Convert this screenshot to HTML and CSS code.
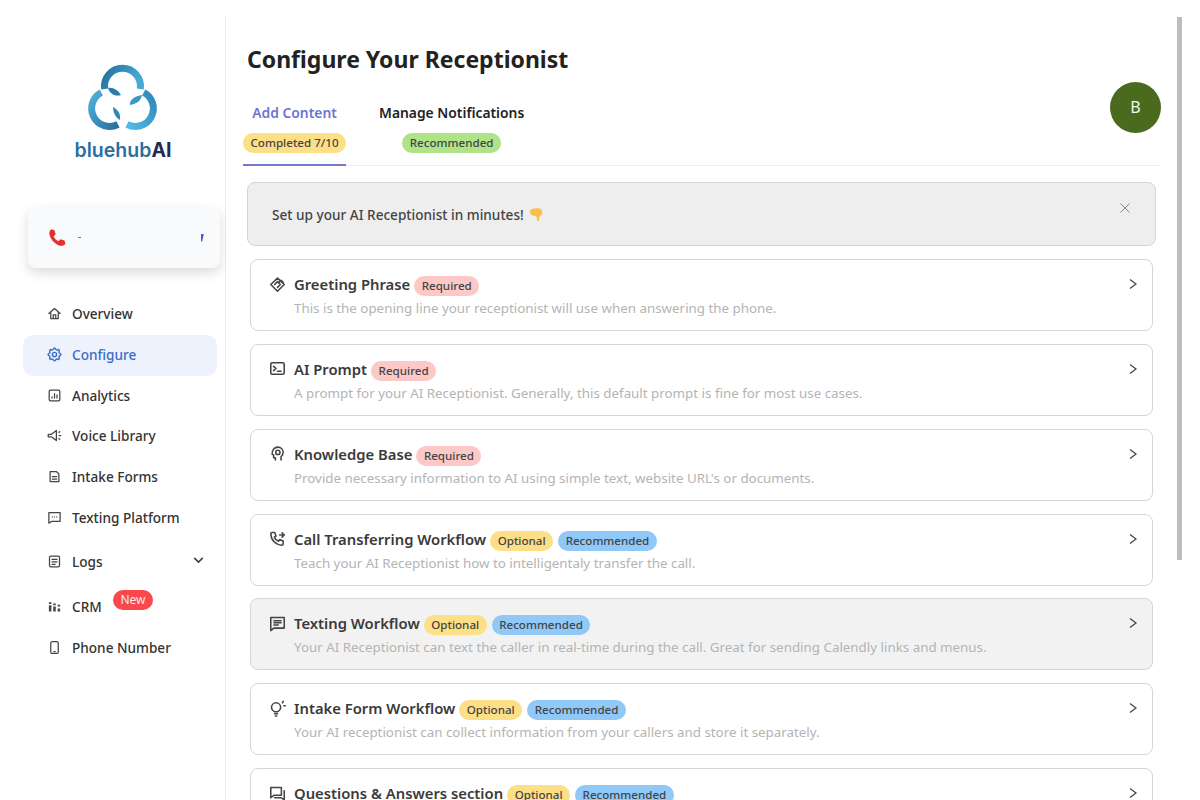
FILE: index.html
```html
<!DOCTYPE html>
<html lang="en">
<head>
  <meta charset="UTF-8">
  <title>Configure Your Receptionist</title>
  <link rel="stylesheet" href="styles.css">
</head>
<body>
  <div class="app">
    <aside class="sidebar">
      <div class="brand">
        <svg class="logo" viewBox="0 0 80 72" width="80" height="72">
          <defs>
            <linearGradient id="arcTop" x1="0" y1="0" x2="1" y2="0.3">
              <stop offset="0" stop-color="#24719f"/>
              <stop offset="1" stop-color="#45a9d6"/>
            </linearGradient>
            <linearGradient id="arcLeft" x1="0" y1="0" x2="1" y2="1">
              <stop offset="0" stop-color="#4fb2dd"/>
              <stop offset="1" stop-color="#2a6f9f"/>
            </linearGradient>
            <linearGradient id="arcRight" x1="1" y1="0" x2="0" y2="1">
              <stop offset="0" stop-color="#2f86b6"/>
              <stop offset="1" stop-color="#55bbe6"/>
            </linearGradient>
          </defs>
          <path d="M21.700 27A18 18 0 1 1 57.300 27" fill="none" stroke="url(#arcTop)" stroke-width="7"/>
          <path d="M18.300 30.500A18 18 0 1 0 35 62.400" fill="none" stroke="url(#arcLeft)" stroke-width="7"/>
          <path d="M60.700 30.500A18 18 0 1 1 44 62.400" fill="none" stroke="url(#arcRight)" stroke-width="7"/>
          <path d="M25 26C30 25 35 28 38 33C32 35 27 32 25 26Z" fill="#2a7dab"/>
          <path d="M47 43C46 38 52 34 59 33C58 39 53 42 47 43Z" fill="#3b98c6"/>
          <path d="M30 45C34 47 38 51 37 58C33 56 30 51 30 45Z" fill="#3286b6"/>
        </svg>
        <div class="wordmark">bluehub<span class="wordmark-ai">AI</span></div>
      </div>

      <div class="phone-card">
        <svg class="phone-icon" viewBox="0 0 24 24" width="21" height="21"><path d="M5 2.500l3.600 1.200 1.300 5-2.400 1.800c1 2.500 3 4.600 5.600 5.700l2-2.300 4.900 1.500 1 3.600c-1.400 2-3.800 3-6.300 2.300C9 19.400 4.200 14.500 2.800 8.500 2.300 6 3 3.800 5 2.500z" fill="#e5302f"/></svg>
        <span class="phone-dash"></span>
        <span class="phone-mark"></span>
      </div>

      <nav class="nav">
        <a class="nav-item">
          <svg viewBox="0 0 24 24"><path d="M3 12l9-8 9 8M6 10v10h12V10M10 20v-6h4v6"/></svg>
          Overview
        </a>
        <a class="nav-item active">
          <svg viewBox="0 0 24 24"><path d="M10.325 4.317c.426 -1.756 2.924 -1.756 3.35 0a1.724 1.724 0 0 0 2.573 1.066c1.543 -.94 3.31 .826 2.37 2.37a1.724 1.724 0 0 0 1.065 2.572c1.756 .426 1.756 2.924 0 3.35a1.724 1.724 0 0 0 -1.066 2.573c.94 1.543 -.826 3.31 -2.37 2.37a1.724 1.724 0 0 0 -2.572 1.065c-.426 1.756 -2.924 1.756 -3.35 0a1.724 1.724 0 0 0 -2.573 -1.066c-1.543 .94 -3.31 -.826 -2.37 -2.37a1.724 1.724 0 0 0 -1.065 -2.572c-1.756 -.426 -1.756 -2.924 0 -3.35a1.724 1.724 0 0 0 1.066 -2.573c-.94 -1.543 .826 -3.31 2.37 -2.37c1 .608 2.296 .07 2.572 -1.065z"/><circle cx="12" cy="12" r="3"/></svg>
          Configure
        </a>
        <a class="nav-item">
          <svg viewBox="0 0 24 24"><rect x="3.500" y="3.500" width="17" height="17" rx="2"/><path d="M8 16v-2M12 16V9M16 16v-5"/></svg>
          Analytics
        </a>
        <a class="nav-item">
          <svg viewBox="0 0 24 24"><path d="M15 4v16L7 14H2v-4h5l8-6zM19 7l1.500-1M19.500 12H22M19 17l1.500 1"/></svg>
          Voice Library
        </a>
        <a class="nav-item">
          <svg viewBox="0 0 24 24"><path d="M5 4h10l4 4v12H5zM8.500 12h7M8.500 16h7"/></svg>
          Intake Forms
        </a>
        <a class="nav-item">
          <svg viewBox="0 0 24 24"><path d="M3 4h18v14H8l-5 3zM8.500 11h.01M12 11h.01M15.500 11h.01"/></svg>
          Texting Platform
        </a>
        <a class="nav-item nav-logs">
          <svg viewBox="0 0 24 24"><rect x="4" y="3.500" width="16" height="17" rx="2"/><path d="M8 8.500h8M8 12.500h8M8 16.500h5"/></svg>
          Logs
          <svg class="nav-caret" viewBox="0 0 24 24"><path d="M5 8l7 7 7-7"/></svg>
        </a>
        <a class="nav-item nav-crm">
          <svg class="solid" viewBox="0 0 24 24"><path d="M3 5h4v3H3zM3 10h4v10H3zM10 12h4v8h-4zM10 7h4v3h-4zM17 9h4v3h-4zM17 15h4v5h-4z"/></svg>
          CRM
          <span class="new-badge">New</span>
        </a>
        <a class="nav-item">
          <svg viewBox="0 0 24 24"><rect x="6" y="2.500" width="12" height="19" rx="2.500"/><path d="M11 18.500h2"/></svg>
          Phone Number
        </a>
      </nav>
    </aside>

    <main class="main">
      <h1 class="page-title">Configure Your Receptionist</h1>

      <div class="tabs-row">
        <div class="tabs">
          <div class="tab tab-active">
            <span class="tab-label">Add Content</span>
            <span class="pill pill-yellow">Completed 7/10</span>
          </div>
          <div class="tab">
            <span class="tab-label">Manage Notifications</span>
            <span class="pill pill-green">Recommended</span>
          </div>
        </div>
        <div class="avatar">B</div>
      </div>

      <div class="alert">
        <span>Set up your AI Receptionist in minutes!</span>
        <svg class="alert-hand" viewBox="0 0 16 16" width="16" height="16"><path d="M1 4.500C3 2.500 7 2 10 2.500c1.500.3 2.500 1 3 2.500.6 1.800.2 3.500-1 4.500l-1.500.8-.5 4c-.1.900-1.800.9-1.900 0L7.500 10.500 4 9.500C1.800 8.800.4 6.500 1 4.500z" fill="#f8bf4b"/></svg>
        <svg class="alert-close" viewBox="0 0 24 24" width="14" height="14"><path d="M3 3l18 18M21 3L3 21"/></svg>
      </div>

      <div class="cards">
        <div class="card">
          <div class="card-head">
            <svg class="card-icon" viewBox="0 0 24 24"><path d="M12 3l9.500 9L12 21.500 2.500 12zM8 12l4-4 4 4-4 4"/><path d="M14 9l3-3 3 3"/></svg>
            <span class="card-title">Greeting Phrase</span>
            <span class="pill pill-red">Required</span>
          </div>
          <p class="card-desc">This is the opening line your receptionist will use when answering the phone.</p>
          <svg class="card-arrow" viewBox="0 0 24 24"><path d="M6 3l12 9-12 9"/></svg>
        </div>

        <div class="card">
          <div class="card-head">
            <svg class="card-icon" viewBox="0 0 24 24"><rect x="2.500" y="4" width="19" height="16" rx="2"/><path d="M6.500 9l3.500 3-3.500 3M12 16h5"/></svg>
            <span class="card-title">AI Prompt</span>
            <span class="pill pill-red">Required</span>
          </div>
          <p class="card-desc">A prompt for your AI Receptionist. Generally, this default prompt is fine for most use cases.</p>
          <svg class="card-arrow" viewBox="0 0 24 24"><path d="M6 3l12 9-12 9"/></svg>
        </div>

        <div class="card">
          <div class="card-head">
            <svg class="card-icon" viewBox="0 0 24 24"><path d="M9 21v-3H6.500v-4L4.500 13C4 7 8 3 12.500 3S20 6.500 20 10.500c0 3-1.500 4.500-3 6V21"/><circle cx="12.500" cy="10.500" r="3"/></svg>
            <span class="card-title">Knowledge Base</span>
            <span class="pill pill-red">Required</span>
          </div>
          <p class="card-desc">Provide necessary information to AI using simple text, website URL's or documents.</p>
          <svg class="card-arrow" viewBox="0 0 24 24"><path d="M6 3l12 9-12 9"/></svg>
        </div>

        <div class="card">
          <div class="card-head">
            <svg class="card-icon" viewBox="0 0 24 24"><path d="M4 3.500h4l2 5-2.500 1.500a11 11 0 0 0 6 6l1.500-2.500 5 2v4c0 1-1 2-2 2C9.500 21 3 14.500 2.500 5.500c0-1 .5-2 1.500-2zM15 7h6M18.500 4l3 3-3 3"/></svg>
            <span class="card-title">Call Transferring Workflow</span>
            <span class="pill pill-yellow">Optional</span>
            <span class="pill pill-blue">Recommended</span>
          </div>
          <p class="card-desc">Teach your AI Receptionist how to intelligentaly transfer the call.</p>
          <svg class="card-arrow" viewBox="0 0 24 24"><path d="M6 3l12 9-12 9"/></svg>
        </div>

        <div class="card card-hover">
          <div class="card-head">
            <svg class="card-icon" viewBox="0 0 24 24"><path d="M2.500 3.500h19v15H7l-4.500 3.500zM7 8h10M7 11h10M7 14h6"/></svg>
            <span class="card-title">Texting Workflow</span>
            <span class="pill pill-yellow">Optional</span>
            <span class="pill pill-blue">Recommended</span>
          </div>
          <p class="card-desc">Your AI Receptionist can text the caller in real-time during the call. Great for sending Calendly links and menus.</p>
          <svg class="card-arrow" viewBox="0 0 24 24"><path d="M6 3l12 9-12 9"/></svg>
        </div>

        <div class="card">
          <div class="card-head">
            <svg class="card-icon" viewBox="0 0 24 24"><path d="M7.500 16.500C5 15 3.500 13 3.500 10.500a6.500 6.500 0 0 1 13 0c0 2.500-1.500 4.500-4 6zM8 19.500h4M9 22.500h2M19 4l1-2M21 8h2"/></svg>
            <span class="card-title">Intake Form Workflow</span>
            <span class="pill pill-yellow">Optional</span>
            <span class="pill pill-blue">Recommended</span>
          </div>
          <p class="card-desc">Your AI receptionist can collect information from your callers and store it separately.</p>
          <svg class="card-arrow" viewBox="0 0 24 24"><path d="M6 3l12 9-12 9"/></svg>
        </div>

        <div class="card">
          <div class="card-head">
            <svg class="card-icon" viewBox="0 0 24 24"><path d="M2.500 3.500h15v11H7l-4.500 3.500zM21.500 8v13l-4-3H8"/></svg>
            <span class="card-title">Questions &amp; Answers section</span>
            <span class="pill pill-yellow">Optional</span>
            <span class="pill pill-blue">Recommended</span>
          </div>
          <svg class="card-arrow" viewBox="0 0 24 24"><path d="M6 3l12 9-12 9"/></svg>
        </div>
      </div>
    </main>

    <div class="scrollbar"><div class="scrollbar-thumb"></div></div>
  </div>
</body>
</html>
```

FILE: styles.css
```css
* {
  box-sizing: border-box;
}

html, body {
  margin: 0;
  height: 800px;
  overflow: hidden;
  background: #fff;
}

body {
  font-family: "Noto Sans", "Open Sans", sans-serif;
  color: #333;
  padding-top: 17px;
}

.app {
  display: flex;
  height: 783px;
  padding-right: 18px;
}

/* sidebar */
.sidebar {
  width: 226px;
  flex-shrink: 0;
  border-right: 1px solid #ececec;
  padding-top: 45px;
}

.brand {
  display: flex;
  flex-direction: column;
  align-items: center;
  padding-left: 21px;
}

.logo {
  display: block;
}

.wordmark {
  font-family: Inter, sans-serif;
  font-size: 19.500px;
  line-height: 24px;
  font-weight: 600;
  color: #2b6f9e;
  margin-top: 4px;
}

.wordmark-ai {
  font-weight: 700;
  color: #202c56;
}

.phone-card {
  position: relative;
  display: flex;
  align-items: center;
  height: 61px;
  margin: 45px 5px 0 28px;
  padding-left: 19px;
  background: #f9fafc;
  border-radius: 8px;
  box-shadow: 0 5px 12px rgba(0, 0, 0, 0.14);
}

.phone-dash {
  width: 3px;
  height: 1px;
  margin-left: 10px;
  background: #5d6bc8;
}

.phone-mark {
  width: 3px;
  height: 8px;
  margin-left: 120px;
  background: #4f5fc4;
  clip-path: polygon(0 0, 100% 0, 40% 100%, 0 100%);
}

.nav {
  display: flex;
  flex-direction: column;
  margin: 26px 8px 0 23px;
}

.nav-item {
  position: relative;
  display: flex;
  align-items: center;
  height: 40.850px;
  padding-left: 23px;
  padding-bottom: 2px;
  border-radius: 10px;
  font-size: 13.600px;
  font-weight: 500;
  color: #333;
}

.nav-item svg {
  width: 15px;
  height: 15px;
  margin-right: 10px;
  margin-left: 1px;
  fill: none;
  stroke: #444;
  stroke-width: 2;
  stroke-linejoin: round;
  stroke-linecap: round;
  flex-shrink: 0;
}

.nav-item svg.solid {
  fill: #444;
  stroke: none;
}

.nav-item.active {
  background: #edf2fc;
  color: #3a6cc8;
}

.nav-item.active svg {
  width: 17px;
  height: 17px;
  margin-right: 9px;
  margin-left: 0;
  stroke: #3a6cc8;
}

.nav-logs {
  margin-top: 3.500px;
}

.nav-crm {
  margin-top: 4px;
}

.nav-item svg.nav-caret {
  position: absolute;
  right: 12px;
  top: 11px;
  width: 13px;
  height: 13px;
  margin: 0;
  stroke-width: 3;
}

.new-badge {
  position: absolute;
  left: 90px;
  top: 3px;
  width: 40px;
  height: 20px;
  border-radius: 10px;
  background: #f8484e;
  color: #fdeaea;
  font-size: 12px;
  font-weight: 400;
  line-height: 20px;
  text-align: center;
}

/* main area */
.main {
  flex: 1;
  min-width: 0;
  padding: 24px 0 0 17px;
  overflow: hidden;
}

.page-title {
  margin: 0 0 0 4px;
  font-size: 23px;
  line-height: 36px;
  font-weight: 700;
  color: #222;
}

.tabs-row {
  display: flex;
  justify-content: space-between;
  align-items: flex-start;
  width: 917px;
  height: 65px;
  margin-top: 24px;
  border-bottom: 1px solid #eeeeee;
}

.tabs {
  display: flex;
  height: 65px;
}

.tab {
  display: flex;
  flex-direction: column;
  align-items: center;
  height: 65px;
  margin-right: 33px;
  padding-top: 1px;
}

.tab-active {
  border-bottom: 2px solid #7479cf;
}

.tab-label {
  font-size: 13.850px;
  line-height: 22px;
  font-weight: 600;
  color: #222;
}

.tab-active .tab-label {
  color: #6c74d2;
}

.tab .pill {
  margin: 9px 0 0;
}

.avatar {
  width: 51px;
  height: 51px;
  margin-top: -19px;
  margin-right: -1px;
  border-radius: 50%;
  background: #4a6a1e;
  color: #f3f5ea;
  font-size: 16px;
  line-height: 51px;
  text-align: center;
}

.pill {
  display: inline-block;
  height: 20px;
  padding: 0 7.500px;
  border-radius: 10px;
  font-size: 11.600px;
  line-height: 20px;
  font-weight: 500;
  color: #444;
  white-space: nowrap;
}

.pill-yellow {
  background: #fddf88;
}

.pill-green {
  background: #aee38a;
}

.pill-red {
  background: #fcc9c7;
}

.pill-blue {
  background: #90c8f8;
}

.alert {
  display: flex;
  align-items: center;
  position: relative;
  width: 909px;
  height: 64px;
  margin: 16px 0 0 4px;
  padding: 0 24px;
  background: #eeeeee;
  border: 1px solid #d4d4d4;
  border-radius: 8px;
  font-size: 13.600px;
  font-weight: 500;
  color: #444;
}

.alert-hand {
  margin-left: 5px;
}

.alert-close {
  position: absolute;
  right: 24px;
  top: 19px;
  width: 12px;
  height: 12px;
  fill: none;
  stroke: #888;
  stroke-width: 2;
}

.cards {
  display: flex;
  flex-direction: column;
  gap: 12.850px;
  width: 903px;
  margin: 13px 0 0 7px;
}

.card {
  position: relative;
  flex-shrink: 0;
  height: 72px;
  padding: 12px 43px 0 18px;
  border: 1px solid #d6d6d6;
  border-radius: 8px;
  background: #fff;
}

.card-hover {
  background: #f2f2f2;
}

.card-head {
  display: flex;
  align-items: center;
  height: 24px;
}

.card-icon {
  width: 17px;
  height: 17px;
  margin-right: 8px;
  fill: none;
  stroke: #444;
  stroke-width: 2.200;
  stroke-linejoin: round;
  stroke-linecap: round;
  flex-shrink: 0;
}

.card-title {
  font-size: 14.800px;
  font-weight: 600;
  color: #3a3a3a;
  margin-right: 4px;
}

.card-head .pill {
  margin-right: 5px;
  margin-top: 4px;
}

.card-desc {
  margin: 1px 0 0 25px;
  font-size: 13.350px;
  line-height: 22px;
  color: #b4b4b4;
}

.card-arrow {
  position: absolute;
  right: 13px;
  top: 18px;
  width: 12px;
  height: 12px;
  fill: none;
  stroke: #444;
  stroke-width: 2.500;
}

.scrollbar {
  width: 5px;
  flex-shrink: 0;
}

.scrollbar-thumb {
  height: 543px;
  background: #bdbdbd;
}
```
